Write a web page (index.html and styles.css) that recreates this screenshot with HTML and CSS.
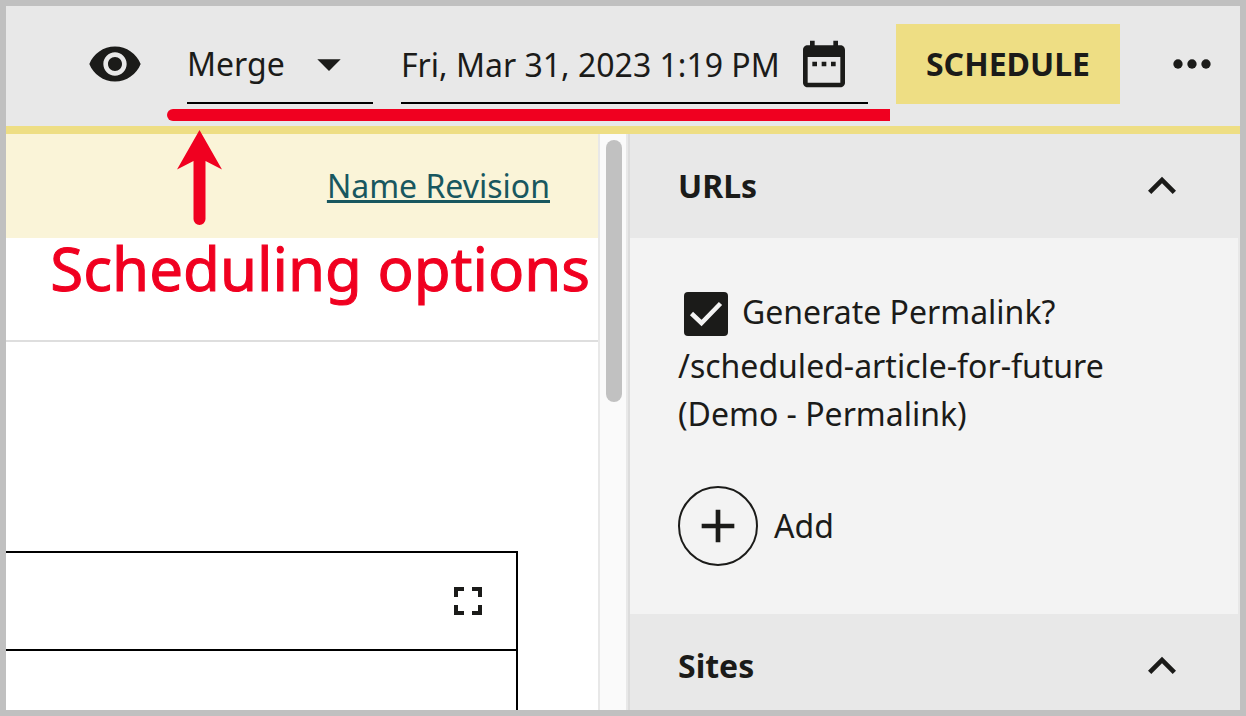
FILE: index.html
```html
<!DOCTYPE html>
<html lang="en">
<head>
<meta charset="utf-8">
<title>Schedule revision</title>
<link rel="stylesheet" href="styles.css">
</head>
<body>
<div class="frame">
  <header class="toolbar">
    <button class="icon-button" type="button" aria-label="Preview">
      <svg class="icon" viewBox="0 0 24 24"><path d="M12 4.5C7 4.5 2.73 7.61 1 12c1.730 4.390 6 7.500 11 7.500s9.270-3.110 11-7.500c-1.730-4.390-6-7.500-11-7.500zM12 17c-2.760 0-5-2.240-5-5s2.240-5 5-5 5 2.240 5 5-2.240 5-5 5zm0-8c-1.660 0-3 1.340-3 3s1.340 3 3 3 3-1.340 3-3-1.340-3-3-3z"/></svg>
    </button>
    <div class="field field-action">
      <select class="control" aria-label="Action"><option>Merge</option></select>
      <svg class="icon field-arrow" viewBox="0 0 24 24"><path d="M7 10l5 5 5-5z"/></svg>
    </div>
    <div class="field field-date">
      <input class="control" type="text" aria-label="Scheduled date" value="Fri, Mar 31, 2023 1:19 PM">
      <button class="picker" type="button" aria-label="Choose date">
        <svg class="icon" viewBox="0 0 24 24"><path d="M9 11H7v2h2v-2zm4 0h-2v2h2v-2zm4 0h-2v2h2v-2zm2-7h-1V2h-2v2H8V2H6v2H5c-1.110 0-1.990.9-1.990 2L3 20c0 1.100.890 2 2 2h14c1.100 0 2-.9 2-2V6c0-1.100-.9-2-2-2zm0 16H5V9h14v11z"/></svg>
      </button>
    </div>
    <button class="schedule" type="button">SCHEDULE</button>
    <button class="icon-button" type="button" aria-label="More">
      <svg class="icon" viewBox="0 0 24 24"><circle cx="6" cy="12" r="2"/><circle cx="12" cy="12" r="2"/><circle cx="18" cy="12" r="2"/></svg>
    </button>
  </header>

  <div class="workspace">
    <main class="editor">
      <div class="banner"><a class="revision-link" href="#">Name Revision</a></div>
      <div class="title-row"></div>
      <div class="rich-text">
        <div class="rich-toolbar">
          <button class="expand" type="button" aria-label="Full screen">
            <svg class="icon-small" viewBox="0 0 24 24"><path d="M7 14H5v5h5v-2H7v-3zm-2-4h2V7h3V5H5v5zm12 7h-3v2h5v-5h-2v3zM14 5v2h3v3h2V5h-5z"/></svg>
          </button>
        </div>
      </div>
    </main>
    <div class="scroll-track"><div class="scroll-thumb"></div></div>
    <aside class="sidebar">
      <h2 class="section-head">URLs
        <button class="toggle" type="button" aria-label="Collapse URLs">
          <svg class="icon" viewBox="0 0 24 24"><path d="M12 8l-6 6 1.410 1.410L12 10.830l4.590 4.580L18 14z"/></svg>
        </button>
      </h2>
      <div class="section-body">
        <label class="permalink">
          <span class="tick">
            <input class="tick-box" type="checkbox" checked>
            <svg class="tick-mark" viewBox="0 0 44 44"><path d="M7.500 21.500L17.500 31L36.500 11.500"/></svg>
          </span>
          Generate Permalink?
        </label>
        <p class="path">/scheduled-article-for-future<br>(Demo - Permalink)</p>
        <button class="add" type="button">
          <span class="add-circle"><svg class="icon" viewBox="0 0 24 24"><path d="M19 13h-6v6h-2v-6H5v-2h6V5h2v6h6v2z"/></svg></span>
          Add
        </button>
      </div>
      <h2 class="section-head">Sites
        <button class="toggle" type="button" aria-label="Collapse Sites">
          <svg class="icon" viewBox="0 0 24 24"><path d="M12 8l-6 6 1.410 1.410L12 10.830l4.590 4.580L18 14z"/></svg>
        </button>
      </h2>
    </aside>
  </div>

  <div class="note">
    <div class="note-line"></div>
    <svg class="note-arrow" viewBox="0 0 46 96"><path d="M23.500 0L46 39.500L29.500 31V89a6 6 0 0 1-12 0V31L1 39.500z"/></svg>
  </div>
  <div class="note-text">Scheduling options</div>
</div>
</body>
</html>
```

FILE: styles.css
```css
* {
  box-sizing: border-box;
}

body {
  margin: 0;
  color: #1b1b19;
  font: 32px/48px "Noto Sans", sans-serif;
}

button,
input,
select {
  margin: 0;
  padding: 0;
  border: 0;
  border-radius: 0;
  background: none;
  color: inherit;
  font: inherit;
}

svg {
  display: block;
  fill: currentColor;
}

.frame {
  position: relative;
  display: flex;
  flex-direction: column;
  height: 100vh;
  border: 6px solid #c0c0c0;
  background: #fff;
  overflow: hidden;
}

.icon {
  width: 56px;
  height: 56px;
  flex: none;
}

.icon-small {
  width: 48px;
  height: 48px;
}

/* Toolbar */
.toolbar {
  display: flex;
  flex: none;
  justify-content: flex-end;
  align-items: center;
  gap: 28px;
  height: 128px;
  padding: 0 4px 4px 0;
  border-bottom: 8px solid #eede84;
  background: #e8e8e8;
}

.icon-button {
  display: flex;
  justify-content: center;
  align-items: center;
  width: 88px;
  height: 80px;
}

.field {
  display: flex;
  align-items: center;
  height: 80px;
  padding: 2px 16px 0 0;
  border-bottom: 2px solid #000;
}

.field-action {
  display: grid;
  width: 186px;
  padding-right: 0;
}

.field-action > * {
  grid-area: 1 / 1;
}

.field-arrow {
  justify-self: end;
  margin-right: 16px;
  pointer-events: none;
}

.field-date {
  width: 467px;
}

.control {
  flex: 1;
  min-width: 0;
  width: 100%;
  height: 76px;
  appearance: none;
}

.schedule {
  width: 224px;
  height: 80px;
  background: #eede84;
  font-weight: 700;
}

/* Workspace */
.workspace {
  display: flex;
  flex: 1;
  min-height: 0;
}

.editor {
  display: flex;
  flex: 1;
  flex-direction: column;
  min-width: 0;
}

.banner {
  display: flex;
  flex: none;
  justify-content: flex-end;
  padding: 28px 48px;
  background: #faf4d8;
}

.revision-link {
  color: #18575f;
  text-decoration-thickness: 3px;
  text-underline-offset: 2px;
}

.title-row {
  flex: none;
  height: 104px;
  border-bottom: 2px solid #dedede;
}

.rich-text {
  flex: 1;
  margin: 209px 80px 0 0;
  border: solid #000;
  border-width: 2px 2px 0 0;
}

.rich-toolbar {
  display: flex;
  justify-content: flex-end;
  padding: 24px;
  border-bottom: 2px solid #000;
}

.scroll-track {
  flex: none;
  width: 30px;
  padding: 6px;
  border: solid #e8e8e8;
  border-width: 0 2px;
  background: #fafafa;
}

.scroll-thumb {
  width: 16px;
  height: 262px;
  border-radius: 8px;
  background: #c1c1c1;
}

/* Sidebar */
.sidebar {
  flex: none;
  width: 612px;
  border: solid #e8e8e8;
  border-width: 0 2px;
  border-left-color: #dcdcdc;
  background: #f3f3f3;
}

.section-head {
  display: flex;
  justify-content: space-between;
  align-items: center;
  height: 104px;
  margin: 0;
  padding: 0 48px;
  background: #e8e8e8;
  font-size: 32px;
  font-weight: 700;
}

.section-body {
  padding: 48px;
}

.permalink {
  display: flex;
  align-items: center;
  gap: 14px;
  height: 56px;
  padding: 0 0 4px 6px;
}

.tick {
  display: grid;
  width: 44px;
  height: 44px;
  margin-top: 4px;
}

.tick > * {
  grid-area: 1 / 1;
}

.tick-box {
  width: 44px;
  height: 44px;
  border-radius: 4px;
  background: #1b1b19;
  appearance: none;
}

.tick-mark {
  width: 44px;
  height: 44px;
  fill: none;
  stroke: #f3f3f3;
  stroke-width: 4.5;
  pointer-events: none;
}

.path {
  margin: 0 0 48px;
}

.add {
  display: flex;
  align-items: center;
  gap: 16px;
}

.add-circle {
  display: grid;
  place-items: center;
  width: 80px;
  height: 80px;
  border: 2px solid #1b1b19;
  border-radius: 50%;
}

/* Callout drawn over the interface */
.note {
  position: absolute;
  top: 103px;
  right: 350px;
  width: 723px;
  color: #f00020;
  pointer-events: none;
}

.note-line {
  height: 12px;
  border-radius: 6px 0 0 6px;
  background: #f00020;
}

.note-arrow {
  width: 46px;
  height: 96px;
  margin: 9px 0 0 9px;
}

.note-text {
  position: absolute;
  top: 218px;
  right: 650px;
  color: #f00020;
  font-size: 60px;
  line-height: 88px;
  white-space: nowrap;
  -webkit-text-stroke: 1px #f00020;
}
```
